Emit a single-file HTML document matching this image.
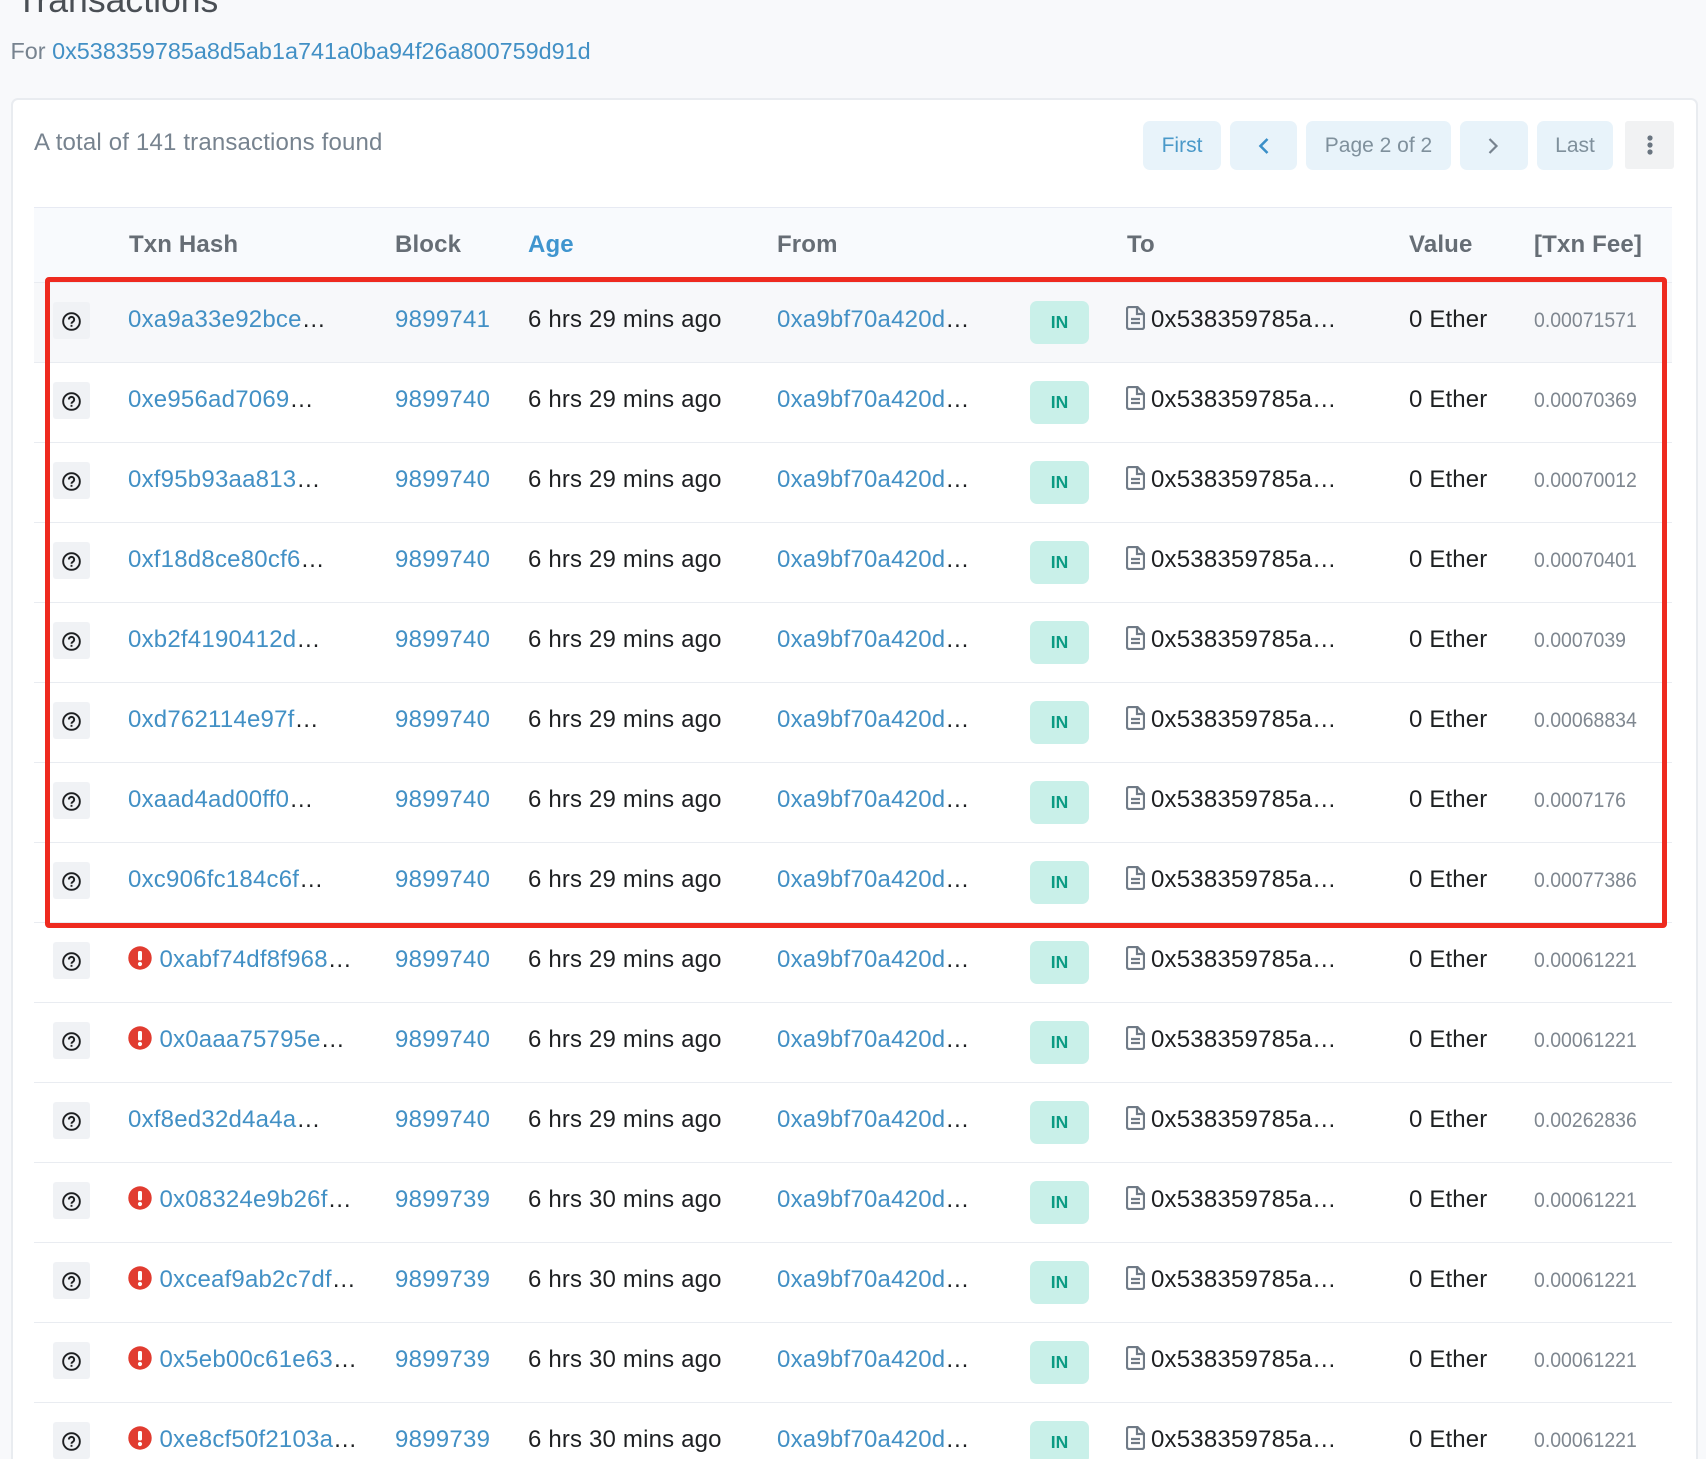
<!DOCTYPE html>
<html lang="en"><head><meta charset="utf-8"><title>Transactions</title>
<style>
html,body{margin:0;padding:0;width:1706px;height:1459px;overflow:hidden}
body{background:#f8f9fb;font-family:"Liberation Sans",Arial,sans-serif;font-size:24px;color:#1e2022}
#wrap{position:relative;width:1706px;height:1459px;overflow:hidden;background:#f8f9fb}
a{color:#4290c5;text-decoration:none}
.abs,.r>*{position:absolute;white-space:nowrap;line-height:30px}
#card{position:absolute;left:10.5px;top:97.5px;width:1683.5px;height:1400px;background:#fff;border:2px solid #e9ecf0;border-radius:7px;box-sizing:content-box}
.btn{position:absolute;top:121px;height:49px;line-height:49px;text-align:center;background:#e8f3fa;border-radius:7px;font-size:21px;color:#7f909c}
#thead{position:absolute;left:34px;top:207px;width:1638px;height:75px;background:#f8fafd;border-top:1px solid #e7eaf3;box-sizing:border-box}
.th{position:absolute;top:230px;font-weight:bold;line-height:30px;color:#666d75;white-space:nowrap;letter-spacing:.15px}
.r{position:absolute;left:0;width:1706px;height:80px}
.r:before{content:"";position:absolute;left:34px;width:1638px;top:0;height:1px;background:#e9ecf1}
.q{left:53px;top:20px;width:37px;height:37px;background:#f0f2f5;border-radius:3px}
.q svg{position:absolute;left:8.5px;top:10px}
.x{left:128px;top:36px;transform:translateY(-50%);width:24px;height:24px}
.h{left:128px;top:23px;letter-spacing:.22px}.h2{left:159.5px;top:23px;letter-spacing:.2px}
.b{left:395px;top:23px;letter-spacing:.25px}
.g{left:528px;top:23px;letter-spacing:.17px}
.f{left:777px;top:23px;letter-spacing:.22px}
.n{left:1030px;top:19px;width:59px;height:43px;background:#c9f0e9;border-radius:7px;text-align:center;font-size:17.5px;font-weight:bold;line-height:43px;color:#0b9b83}
.d{left:1126px;top:24px}
.t{left:1151px;top:23px;letter-spacing:.2px}
.v{left:1409px;top:23px;letter-spacing:.15px}
.e{left:1534px;top:22.5px;font-size:21.5px;color:#7f8790;transform:scaleX(.905);transform-origin:left}
#red{position:absolute;left:45px;top:277px;width:1622px;height:651px;box-sizing:border-box;border:5px solid #ee2a1f;border-radius:4px;z-index:5}
</style></head>
<body>
<div id="wrap">
<svg width="0" height="0" style="position:absolute"><defs>
<symbol id="qi" viewBox="0 0 18 18"><circle cx="9" cy="9" r="7.9" fill="none" stroke="#1e2022" stroke-width="1.8"/><path d="M6.5 7.1a2.5 2.5 0 1 1 3.9 2.1c-.9.6-1.4 1-1.4 1.9" fill="none" stroke="#1e2022" stroke-width="1.8"/><rect x="8.1" y="12.2" width="1.8" height="1.8" fill="#1e2022"/></symbol>
<symbol id="di" viewBox="0 0 19 24"><path d="M3 1h8.5L18 7.5V21a2 2 0 0 1-2 2H3a2 2 0 0 1-2-2V3a2 2 0 0 1 2-2z" fill="none" stroke="#6f7a86" stroke-width="2.2"/><path d="M11 1v7h7" fill="none" stroke="#6f7a86" stroke-width="2.2"/><path d="M5 13h9M5 17h9" stroke="#6f7a86" stroke-width="2.2"/></symbol>
<symbol id="xi" viewBox="0 0 24 24"><circle cx="12" cy="12" r="11.7" fill="#e13c30"/><rect x="10" y="5" width="4" height="9.5" rx="1.6" fill="#fff"/><circle cx="12" cy="18" r="2.1" fill="#fff"/></symbol>
</defs></svg>

<div class="abs" style="left:16px;top:-20px;font-size:35.6px;line-height:40px;color:#4a4f55">Transactions</div>
<div class="abs" style="left:10.5px;top:36px;color:#77838f;font-size:23.4px">For <a href="#">0x538359785a8d5ab1a741a0ba94f26a800759d91d</a></div>

<div id="card"></div>
<div class="abs" style="left:34px;top:128px;color:#77838f;font-size:24px;letter-spacing:.17px">A total of 141 transactions found</div>

<div class="btn" style="left:1143px;width:78px;color:#4a99c9">First</div>
<div class="btn" style="left:1230px;width:67px"><svg width="14" height="18" viewBox="0 0 14 18" style="position:absolute;left:27px;top:16px"><path d="M10.5 2L3.5 9l7 7" fill="none" stroke="#3a8fc8" stroke-width="2.6"/></svg></div>
<div class="btn" style="left:1306px;width:145px">Page 2 of 2</div>
<div class="btn" style="left:1460px;width:68px"><svg width="14" height="18" viewBox="0 0 14 18" style="position:absolute;left:26px;top:16px"><path d="M3.5 2l7 7-7 7" fill="none" stroke="#77838f" stroke-width="2.2"/></svg></div>
<div class="btn" style="left:1537px;width:76px">Last</div>
<div class="btn" style="left:1625px;width:49px;height:48px;background:#f1f2f3;border-radius:3px"><svg width="8" height="24" viewBox="0 0 8 24" style="position:absolute;left:20.5px;top:12px"><circle cx="4" cy="5" r="2.6" fill="#6a7580"/><circle cx="4" cy="12" r="2.6" fill="#6a7580"/><circle cx="4" cy="19" r="2.6" fill="#6a7580"/></svg></div>

<div id="thead"></div>
<div class="th" style="left:129px">Txn Hash</div>
<div class="th" style="left:395px">Block</div>
<div class="th" style="left:528px;color:#3f95cf">Age</div>
<div class="th" style="left:777px">From</div>
<div class="th" style="left:1127px">To</div>
<div class="th" style="left:1409px">Value</div>
<div class="th" style="left:1534px">[Txn Fee]</div>

<div style="position:absolute;left:34px;top:282px;width:1638px;height:80px;background:#f7f8fa"></div>

<div class="r" style="top:282px"><div class="q"><svg width="19" height="19"><use href="#qi"/></svg></div><div class="h"><a href="#">0xa9a33e92bce</a>…</div><a class="b" href="#">9899741</a><div class="g">6 hrs 29 mins ago</div><div class="f"><a href="#">0xa9bf70a420d</a>…</div><div class="n">IN</div><svg class="d" width="19" height="24"><use href="#di"/></svg><div class="t">0x538359785a…</div><div class="v">0 Ether</div><div class="e">0.00071571</div></div>
<div class="r" style="top:362px"><div class="q"><svg width="19" height="19"><use href="#qi"/></svg></div><div class="h"><a href="#">0xe956ad7069</a>…</div><a class="b" href="#">9899740</a><div class="g">6 hrs 29 mins ago</div><div class="f"><a href="#">0xa9bf70a420d</a>…</div><div class="n">IN</div><svg class="d" width="19" height="24"><use href="#di"/></svg><div class="t">0x538359785a…</div><div class="v">0 Ether</div><div class="e">0.00070369</div></div>
<div class="r" style="top:442px"><div class="q"><svg width="19" height="19"><use href="#qi"/></svg></div><div class="h"><a href="#">0xf95b93aa813</a>…</div><a class="b" href="#">9899740</a><div class="g">6 hrs 29 mins ago</div><div class="f"><a href="#">0xa9bf70a420d</a>…</div><div class="n">IN</div><svg class="d" width="19" height="24"><use href="#di"/></svg><div class="t">0x538359785a…</div><div class="v">0 Ether</div><div class="e">0.00070012</div></div>
<div class="r" style="top:522px"><div class="q"><svg width="19" height="19"><use href="#qi"/></svg></div><div class="h"><a href="#">0xf18d8ce80cf6</a>…</div><a class="b" href="#">9899740</a><div class="g">6 hrs 29 mins ago</div><div class="f"><a href="#">0xa9bf70a420d</a>…</div><div class="n">IN</div><svg class="d" width="19" height="24"><use href="#di"/></svg><div class="t">0x538359785a…</div><div class="v">0 Ether</div><div class="e">0.00070401</div></div>
<div class="r" style="top:602px"><div class="q"><svg width="19" height="19"><use href="#qi"/></svg></div><div class="h"><a href="#">0xb2f4190412d</a>…</div><a class="b" href="#">9899740</a><div class="g">6 hrs 29 mins ago</div><div class="f"><a href="#">0xa9bf70a420d</a>…</div><div class="n">IN</div><svg class="d" width="19" height="24"><use href="#di"/></svg><div class="t">0x538359785a…</div><div class="v">0 Ether</div><div class="e">0.0007039</div></div>
<div class="r" style="top:682px"><div class="q"><svg width="19" height="19"><use href="#qi"/></svg></div><div class="h"><a href="#">0xd762114e97f</a>…</div><a class="b" href="#">9899740</a><div class="g">6 hrs 29 mins ago</div><div class="f"><a href="#">0xa9bf70a420d</a>…</div><div class="n">IN</div><svg class="d" width="19" height="24"><use href="#di"/></svg><div class="t">0x538359785a…</div><div class="v">0 Ether</div><div class="e">0.00068834</div></div>
<div class="r" style="top:762px"><div class="q"><svg width="19" height="19"><use href="#qi"/></svg></div><div class="h"><a href="#">0xaad4ad00ff0</a>…</div><a class="b" href="#">9899740</a><div class="g">6 hrs 29 mins ago</div><div class="f"><a href="#">0xa9bf70a420d</a>…</div><div class="n">IN</div><svg class="d" width="19" height="24"><use href="#di"/></svg><div class="t">0x538359785a…</div><div class="v">0 Ether</div><div class="e">0.0007176</div></div>
<div class="r" style="top:842px"><div class="q"><svg width="19" height="19"><use href="#qi"/></svg></div><div class="h"><a href="#">0xc906fc184c6f</a>…</div><a class="b" href="#">9899740</a><div class="g">6 hrs 29 mins ago</div><div class="f"><a href="#">0xa9bf70a420d</a>…</div><div class="n">IN</div><svg class="d" width="19" height="24"><use href="#di"/></svg><div class="t">0x538359785a…</div><div class="v">0 Ether</div><div class="e">0.00077386</div></div>
<div class="r" style="top:922px"><div class="q"><svg width="19" height="19"><use href="#qi"/></svg></div><svg class="x" width="24" height="24"><use href="#xi"/></svg><div class="h2"><a href="#">0xabf74df8f968</a>…</div><a class="b" href="#">9899740</a><div class="g">6 hrs 29 mins ago</div><div class="f"><a href="#">0xa9bf70a420d</a>…</div><div class="n">IN</div><svg class="d" width="19" height="24"><use href="#di"/></svg><div class="t">0x538359785a…</div><div class="v">0 Ether</div><div class="e">0.00061221</div></div>
<div class="r" style="top:1002px"><div class="q"><svg width="19" height="19"><use href="#qi"/></svg></div><svg class="x" width="24" height="24"><use href="#xi"/></svg><div class="h2"><a href="#">0x0aaa75795e</a>…</div><a class="b" href="#">9899740</a><div class="g">6 hrs 29 mins ago</div><div class="f"><a href="#">0xa9bf70a420d</a>…</div><div class="n">IN</div><svg class="d" width="19" height="24"><use href="#di"/></svg><div class="t">0x538359785a…</div><div class="v">0 Ether</div><div class="e">0.00061221</div></div>
<div class="r" style="top:1082px"><div class="q"><svg width="19" height="19"><use href="#qi"/></svg></div><div class="h"><a href="#">0xf8ed32d4a4a</a>…</div><a class="b" href="#">9899740</a><div class="g">6 hrs 29 mins ago</div><div class="f"><a href="#">0xa9bf70a420d</a>…</div><div class="n">IN</div><svg class="d" width="19" height="24"><use href="#di"/></svg><div class="t">0x538359785a…</div><div class="v">0 Ether</div><div class="e">0.00262836</div></div>
<div class="r" style="top:1162px"><div class="q"><svg width="19" height="19"><use href="#qi"/></svg></div><svg class="x" width="24" height="24"><use href="#xi"/></svg><div class="h2"><a href="#">0x08324e9b26f</a>…</div><a class="b" href="#">9899739</a><div class="g">6 hrs 30 mins ago</div><div class="f"><a href="#">0xa9bf70a420d</a>…</div><div class="n">IN</div><svg class="d" width="19" height="24"><use href="#di"/></svg><div class="t">0x538359785a…</div><div class="v">0 Ether</div><div class="e">0.00061221</div></div>
<div class="r" style="top:1242px"><div class="q"><svg width="19" height="19"><use href="#qi"/></svg></div><svg class="x" width="24" height="24"><use href="#xi"/></svg><div class="h2"><a href="#">0xceaf9ab2c7df</a>…</div><a class="b" href="#">9899739</a><div class="g">6 hrs 30 mins ago</div><div class="f"><a href="#">0xa9bf70a420d</a>…</div><div class="n">IN</div><svg class="d" width="19" height="24"><use href="#di"/></svg><div class="t">0x538359785a…</div><div class="v">0 Ether</div><div class="e">0.00061221</div></div>
<div class="r" style="top:1322px"><div class="q"><svg width="19" height="19"><use href="#qi"/></svg></div><svg class="x" width="24" height="24"><use href="#xi"/></svg><div class="h2"><a href="#">0x5eb00c61e63</a>…</div><a class="b" href="#">9899739</a><div class="g">6 hrs 30 mins ago</div><div class="f"><a href="#">0xa9bf70a420d</a>…</div><div class="n">IN</div><svg class="d" width="19" height="24"><use href="#di"/></svg><div class="t">0x538359785a…</div><div class="v">0 Ether</div><div class="e">0.00061221</div></div>
<div class="r" style="top:1402px"><div class="q"><svg width="19" height="19"><use href="#qi"/></svg></div><svg class="x" width="24" height="24"><use href="#xi"/></svg><div class="h2"><a href="#">0xe8cf50f2103a</a>…</div><a class="b" href="#">9899739</a><div class="g">6 hrs 30 mins ago</div><div class="f"><a href="#">0xa9bf70a420d</a>…</div><div class="n">IN</div><svg class="d" width="19" height="24"><use href="#di"/></svg><div class="t">0x538359785a…</div><div class="v">0 Ether</div><div class="e">0.00061221</div></div>

<div id="red"></div>
</div>
</body></html>
